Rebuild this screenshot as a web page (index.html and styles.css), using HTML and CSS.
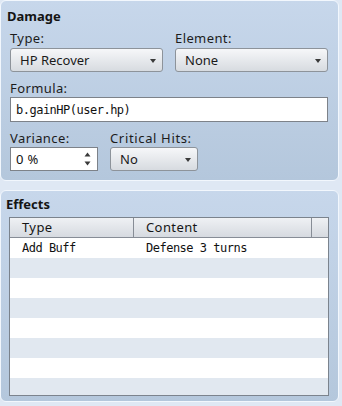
FILE: index.html
```html
<!DOCTYPE html>
<html>
<head>
<meta charset="utf-8">
<link rel="stylesheet" href="styles.css">
</head>
<body>
<section class="panel damage">
  <h2 class="title">Damage</h2>
  <div class="row two">
    <div class="field">
      <label class="lbl">Type:</label>
      <div class="select wide"><span>HP Recover</span><i class="arrow"></i></div>
    </div>
    <div class="field">
      <label class="lbl">Element:</label>
      <div class="select wide"><span>None</span><i class="arrow"></i></div>
    </div>
  </div>
  <div class="field formula">
    <label class="lbl">Formula:</label>
    <div class="input mono">b.gainHP(user.hp)</div>
  </div>
  <div class="row small">
    <div class="field">
      <label class="lbl">Variance:</label>
      <div class="input spin"><span>0 %</span>
        <svg class="spinarrows" width="7" height="16" viewBox="0 0 7 16"><path d="M3.5 1.5 L6.5 5.5 L0.5 5.5 Z M0.5 10.5 L6.5 10.5 L3.5 14.5 Z" fill="#3a3a3a"/></svg>
      </div>
    </div>
    <div class="field">
      <label class="lbl crit">Critical Hits:</label>
      <div class="select narrow"><span>No</span><i class="arrow"></i></div>
    </div>
  </div>
</section>
<section class="panel effects">
  <h2 class="title">Effects</h2>
  <div class="table">
    <div class="thead">
      <div class="th c1">Type</div>
      <div class="th c2">Content</div>
      <div class="th c3"></div>
    </div>
    <div class="tr"><div class="td c1">Add Buff</div><div class="td c2">Defense 3 turns</div></div>
    <div class="tr alt"></div>
    <div class="tr"></div>
    <div class="tr alt"></div>
    <div class="tr"></div>
    <div class="tr alt"></div>
    <div class="tr"></div>
    <div class="tr alt"></div>
  </div>
</section>
</body>
</html>
```
FILE: styles.css
```css
* { box-sizing: border-box; }
html, body { margin: 0; padding: 0; }
body {
  width: 342px;
  height: 406px;
  background: #dfe8f4;
  font-family: "Noto Sans", sans-serif;
  font-size: 13px;
  color: #111;
  overflow: hidden;
}
.panel {
  width: 339px;
  border: 1px solid #f2f7fd;
  border-radius: 6px;
  background: linear-gradient(#c7d7eb, #b4c7dc);
}
.damage { height: 181px; padding: 6px 0 0 9px; }
.effects { margin-top: 9px; height: 212px; padding: 4px 0 0 8px; }
.title {
  margin: 0 0 0 -3px;
  font-size: 13px;
  font-weight: bold;
  line-height: 18px;
  color: #141414;
}
.lbl {
  display: block;
  line-height: 18px;
  color: #1c1c1c;
  letter-spacing: 0.4px;
}
.lbl.crit { letter-spacing: 0.65px; }
.row { display: flex; }
.row.two { gap: 12px; margin-top: 4px; }
.row.small { gap: 12px; margin-top: 7px; }
.field { display: flex; flex-direction: column; }
.formula { margin-top: 7px; }
.select {
  margin-top: 1px;
  height: 24px;
  border: 1px solid #8d939a;
  border-radius: 3px;
  background: linear-gradient(#f6f7f9, #d7dbe0);
  display: flex;
  align-items: center;
  padding: 0 6px 0 9px;
  justify-content: space-between;
  color: #1a1a1a;
}
.select.wide { width: 153px; }
.select.narrow { width: 88px; margin-top: 0; }
.arrow {
  width: 0; height: 0;
  margin-top: 1px;
  border-left: 3.5px solid transparent;
  border-right: 3.5px solid transparent;
  border-top: 4px solid #3a3a3a;
}
.input {
  background: #fff;
  border: 1px solid #7d8289;
  display: flex;
  align-items: center;
  padding-left: 5px;
}
.formula .input { width: 318px; height: 25px; }
.mono { font-family: "DejaVu Sans Mono", monospace; font-size: 12px; letter-spacing: -0.5px; }
.spin { width: 88px; height: 24px; justify-content: space-between; padding-right: 6px; letter-spacing: 0.4px; }
.spinarrows { display: block; }
.table {
  margin-top: 4px;
  width: 320px;
  height: 179px;
  border: 1px solid #7b838d;
  background: #fff;
  overflow: hidden;
}
.thead {
  display: flex;
  height: 20px;
  background: linear-gradient(#eff1f4, #d6dae0);
  border-bottom: 1px solid #878d96;
}
.th {
  line-height: 19px;
  border-right: 1px solid #878d96;
  padding-left: 12px;
  color: #151515;
  letter-spacing: 0.4px;
}
.th.c1 { width: 124px; }
.th.c2 { width: 178px; }
.th.c3 { flex: 1; border-right: 0; }
.tr { height: 20px; display: flex; background: #fff; }
.tr.alt { background: #e1e8f0; }
.td {
  font-family: "DejaVu Sans Mono", monospace;
  font-size: 12px;
  letter-spacing: -0.5px;
  line-height: 21px;
  padding-left: 12px;
  color: #111;
}
.td.c1 { width: 124px; }
```
